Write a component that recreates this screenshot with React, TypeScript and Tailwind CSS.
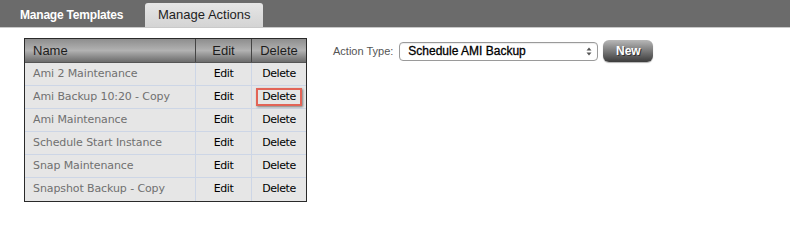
import { useState } from 'react';

interface ActionRow {
  name: string;
}

const rows: ActionRow[] = [
  { name: 'Ami 2 Maintenance' },
  { name: 'Ami Backup 10:20 - Copy' },
  { name: 'Ami Maintenance' },
  { name: 'Schedule Start Instance' },
  { name: 'Snap Maintenance' },
  { name: 'Snapshot Backup - Copy' },
];

export default function App() {
  const [tab, setTab] = useState<'templates' | 'actions'>('actions');
  const highlighted = 1;

  return (
    <div className="w-[790px] h-[208px] bg-white font-['Liberation_Sans',Arial,sans-serif] overflow-hidden">
      {/* Tab bar */}
      <div className="h-[27px] bg-[#6b6b6b] border-b border-[#c9c9c9] flex items-end pl-[20px] gap-[22px] box-content">
        <button
          onClick={() => setTab('templates')}
          className="h-[24px] flex items-center text-[12px] font-bold text-white tracking-[-0.2px]"
        >
          Manage Templates
        </button>
        <button
          onClick={() => setTab('actions')}
          className="h-[24px] w-[118px] flex items-center justify-center rounded-t-[3px] bg-gradient-to-b from-[#e6e6e6] to-[#d4d4d4] text-[13px] text-[#1e1e1e]"
        >
          Manage Actions
        </button>
      </div>

      <div className="flex items-start pl-[24px] pt-[10px]">
        {/* Actions table */}
        <div className="w-[283px] border border-[#2a2a2a] bg-[#e6e6e6]">
          <div className="h-[24px] flex text-[13px] text-[#1c1c1c] bg-gradient-to-b from-[#8e8e8e] via-[#b2b2b2] to-[#6c6c6c] border-b border-[#555]">
            <div className="w-[171px] flex items-center pl-[8px] border-r border-[#444]">Name</div>
            <div className="w-[56px] flex items-center justify-center border-r border-[#444]">Edit</div>
            <div className="flex-1 flex items-center justify-center">Delete</div>
          </div>
          {rows.map((row, i) => (
            <div
              key={row.name}
              className={`h-[23px] flex text-[11px] ${i < rows.length - 1 ? 'border-b border-[#cdd6e6]' : ''}`}
            >
              <div className="w-[171px] flex items-center pl-[8px] border-r border-[#cdd6e6] text-[#707070] font-['DejaVu_Sans',Verdana,sans-serif] tracking-[-0.1px]">
                {row.name}
              </div>
              <div className="w-[56px] flex items-center justify-center border-r border-[#cdd6e6] text-black font-['DejaVu_Sans',Tahoma,sans-serif] tracking-[-0.4px]">
                Edit
              </div>
              <div className="flex-1 flex items-center justify-center text-black font-['DejaVu_Sans',Tahoma,sans-serif] tracking-[-0.4px]">
                {i === highlighted ? (
                  <span className="px-[4px] h-[18px] flex items-center border-2 border-[#e26457] shadow-[1px_1px_2px_rgba(0,0,0,0.45)]">
                    Delete
                  </span>
                ) : (
                  'Delete'
                )}
              </div>
            </div>
          ))}
        </div>

        {/* Action type selector */}
        <div className="flex items-center ml-[26px] mt-[2px]">
          <span className="text-[11px] text-[#555] mr-[6px]">Action Type:</span>
          <div className="w-[199px] h-[19px] rounded-[4px] border border-[#9a9a9a] bg-white flex items-center pl-[8px] pr-[5px] shadow-[inset_0_1px_1px_rgba(0,0,0,0.08)]">
            <span className="flex-1 text-[12px] text-black [-webkit-text-stroke:0.3px_#000]">Schedule AMI Backup</span>
            <svg width="6" height="9" viewBox="0 0 6 9">
              <path d="M0.5 3.5 L3 0.5 L5.5 3.5 Z" fill="#555" />
              <path d="M0.5 5.5 L3 8.5 L5.5 5.5 Z" fill="#555" />
            </svg>
          </div>
          <button className="ml-[5px] w-[50px] h-[22px] rounded-[6px] bg-gradient-to-b from-[#b8b8b8] via-[#7a7a7a] to-[#3c3c3c] text-white text-[12px] font-bold [text-shadow:1px_1px_0_#333] shadow-[0_1px_1px_rgba(0,0,0,0.3)]">
            New
          </button>
        </div>
      </div>
    </div>
  );
}
